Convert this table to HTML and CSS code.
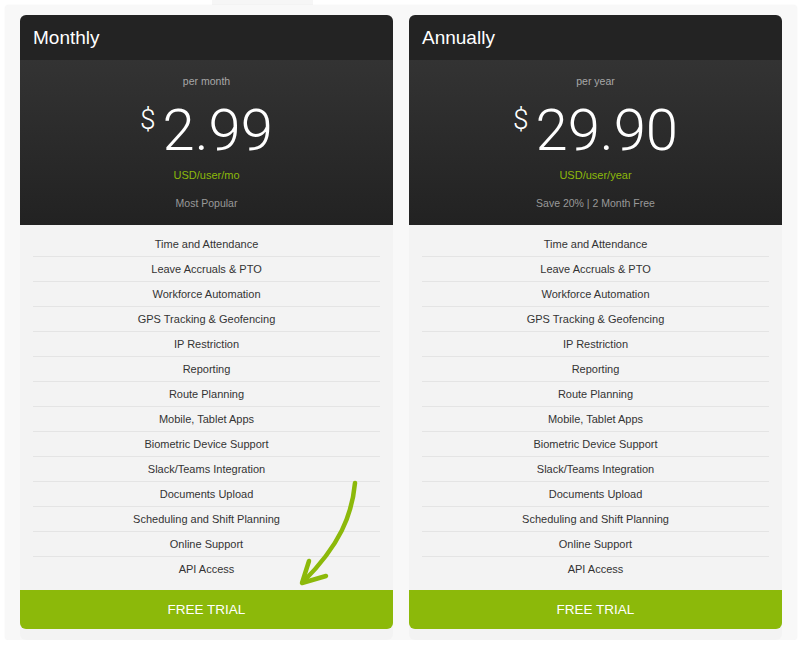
FILE: index.html
```html
<!DOCTYPE html>
<html>
  <head>
    <meta charset="utf8" />
    <title> Pricing </title>
    <link rel="stylesheet" href="styles.css">
  </head>
  <body>
    <div class="tabs"><span class="tab"></span></div>
    <div class="panel">
      <div class="plan">
        <h2 class="plan-name">Monthly</h2>
        <div class="price-box">
          <div class="period">per month</div>
          <div class="price"><span class="currency">$</span>2.99</div>
          <div class="unit">USD/user/mo</div>
          <div class="note">Most Popular</div>
        </div>
        <ul class="features">
          <li>Time and Attendance</li>
          <li>Leave Accruals &amp; PTO</li>
          <li>Workforce Automation</li>
          <li>GPS Tracking &amp; Geofencing</li>
          <li>IP Restriction</li>
          <li>Reporting</li>
          <li>Route Planning</li>
          <li>Mobile, Tablet Apps</li>
          <li>Biometric Device Support</li>
          <li>Slack/Teams Integration</li>
          <li>Documents Upload</li>
          <li>Scheduling and Shift Planning</li>
          <li>Online Support</li>
          <li>API Access</li>
        </ul>
        <a class="trial" href="#">FREE TRIAL</a>
        <!-- hand drawn pointer to the button -->
        <svg class="arrow" width="70" height="120" viewBox="0 0 70 120">
          <path d="M65 8 C 62 40, 50 70, 13 107" />
          <path d="M19 86 L 12 108 L 36 101" />
        </svg>
      </div>
      <div class="plan">
        <h2 class="plan-name">Annually</h2>
        <div class="price-box">
          <div class="period">per year</div>
          <div class="price"><span class="currency">$</span>29.90</div>
          <div class="unit">USD/user/year</div>
          <div class="note">Save 20% | 2 Month Free</div>
        </div>
        <ul class="features">
          <li>Time and Attendance</li>
          <li>Leave Accruals &amp; PTO</li>
          <li>Workforce Automation</li>
          <li>GPS Tracking &amp; Geofencing</li>
          <li>IP Restriction</li>
          <li>Reporting</li>
          <li>Route Planning</li>
          <li>Mobile, Tablet Apps</li>
          <li>Biometric Device Support</li>
          <li>Slack/Teams Integration</li>
          <li>Documents Upload</li>
          <li>Scheduling and Shift Planning</li>
          <li>Online Support</li>
          <li>API Access</li>
        </ul>
        <a class="trial" href="#">FREE TRIAL</a>
      </div>
    </div>
  </body>
</html>
```

FILE: styles.css
```css
body {
  margin: 0;
  background: #fff;
  font-family: "Liberation Sans", Arial, sans-serif;
  color: #333;
}

.tabs {
  height: 5px;
}
.tabs .tab {
  display: block;
  margin-left: 212px;
  width: 101px;
  height: 5px;
  background: #f6f6f6;
}

.panel {
  margin: 0 3px 0 5px;
  height: 635px;
  box-sizing: border-box;
  padding: 10px 15px 0;
  background: #f8f8f8;
  border-radius: 4px;
  box-shadow: 0 0 2px rgba(0, 0, 0, 0.06);
  display: flex;
  gap: 16px;
}

.plan {
  position: relative;
  width: 373px;
  display: flex;
  flex-direction: column;
  border-radius: 6px;
  background: #f3f3f3;
}

.plan-name {
  margin: 0;
  height: 45px;
  line-height: 45px;
  padding: 0 13px;
  background: #232323;
  color: #fff;
  font-size: 19px;
  font-weight: normal;
  border-radius: 6px 6px 0 0;
}

.price-box {
  height: 165px;
  box-sizing: border-box;
  padding-top: 14px;
  text-align: center;
  background: linear-gradient(#333333, #222222);
}

.period {
  font-size: 10.5px;
  line-height: 14px;
  color: #a8a8a8;
}

.price {
  margin-top: 12px;
  height: 60px;
  line-height: 60px;
  font-family: Roboto, "Liberation Sans", sans-serif;
  font-weight: 300;
  font-size: 58px;
  color: #fff;
}

.currency {
  display: inline-block;
  vertical-align: top;
  margin-top: 6px;
  margin-right: 7px;
  font-size: 28px;
  line-height: 28px;
}

.unit {
  margin-top: 8px;
  font-size: 11px;
  line-height: 14px;
  color: #8cb90a;
}

.note {
  margin-top: 14px;
  font-size: 10.5px;
  line-height: 14px;
  color: #999;
}

.features {
  list-style: none;
  margin: 0;
  padding: 7px 13px 9px;
}
.features li {
  height: 24px;
  line-height: 24px;
  border-bottom: 1px solid #e4e4e4;
  text-align: center;
  font-size: 11px;
  color: #333;
}
.features li:last-child {
  border-bottom: none;
}

.trial {
  display: block;
  height: 39px;
  line-height: 39px;
  text-align: center;
  background: #8cb90a;
  color: #fff;
  font-size: 13.5px;
  text-decoration: none;
  border-radius: 0 0 6px 6px;
}

.arrow {
  position: absolute;
  left: 270px;
  top: 460px;
}
.arrow path {
  fill: none;
  stroke: #8cb90a;
  stroke-width: 4.5;
  stroke-linecap: round;
  stroke-linejoin: round;
}
```
